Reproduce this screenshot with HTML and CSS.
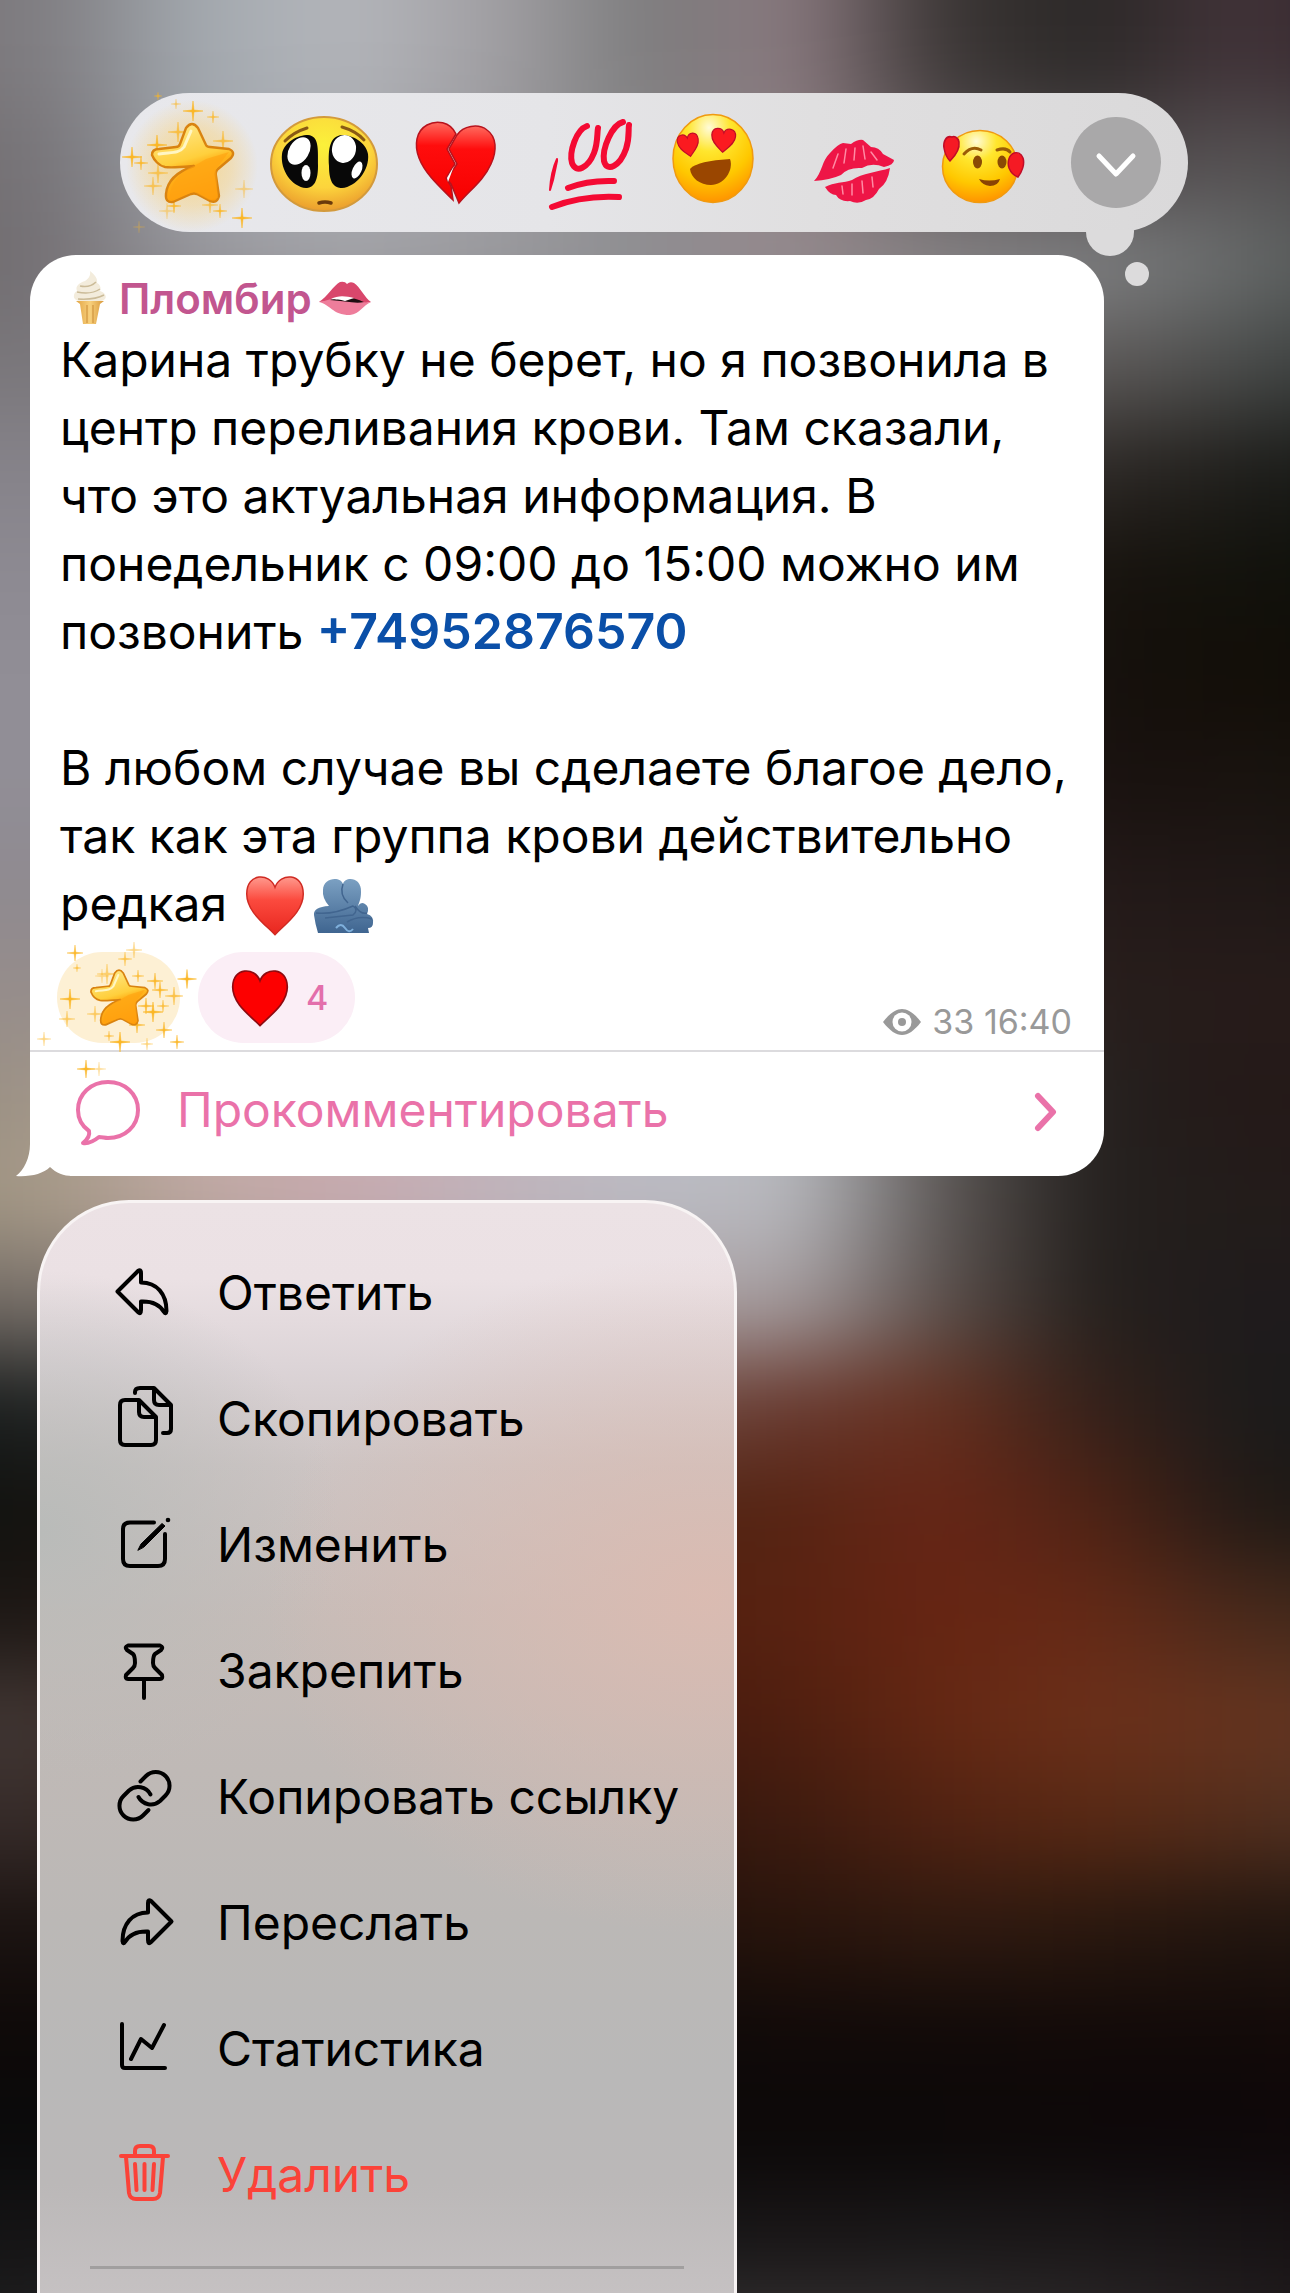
FILE: index.html
```html
<!DOCTYPE html>
<html lang="ru">
<head>
<meta charset="utf-8">
<meta name="viewport" content="width=device-width, initial-scale=1">
<title>Сообщение</title>
<link rel="stylesheet" href="styles.css">
</head>
<body>
<svg class="defs" width="0" height="0" aria-hidden="true">
  <defs>
    <linearGradient id="g-star" x1="0.3" y1="0" x2="0.6" y2="1"><stop offset="0" stop-color="#ffe98a"/><stop offset=".45" stop-color="#ffcf3c"/><stop offset=".55" stop-color="#ffb41c"/><stop offset="1" stop-color="#ff9a08"/></linearGradient>
    <radialGradient id="g-glow"><stop offset="0" stop-color="#ffc94e" stop-opacity=".6"/><stop offset=".6" stop-color="#ffc94e" stop-opacity=".32"/><stop offset="1" stop-color="#ffc94e" stop-opacity="0"/></radialGradient>
    <radialGradient id="g-face" cx=".45" cy=".15" r=".9"><stop offset="0" stop-color="#fffbd8"/><stop offset=".3" stop-color="#ffe62e"/><stop offset=".65" stop-color="#ffc800"/><stop offset="1" stop-color="#ff8a00"/></radialGradient>
    <radialGradient id="g-plead" cx=".5" cy=".3" r=".75"><stop offset="0" stop-color="#fbf13a"/><stop offset=".6" stop-color="#fcd43c"/><stop offset="1" stop-color="#e8922a"/></radialGradient>
    <linearGradient id="g-heart" x1="0" y1="0" x2="0" y2="1"><stop offset="0" stop-color="#ff6a5e"/><stop offset=".3" stop-color="#ff0d0d"/><stop offset="1" stop-color="#f60000"/></linearGradient>
    <linearGradient id="g-heart2" x1="0" y1="0" x2="0" y2="1"><stop offset="0" stop-color="#ff9a8e"/><stop offset=".4" stop-color="#fb4a3e"/><stop offset="1" stop-color="#e8261f"/></linearGradient>
    <linearGradient id="g-hug" x1="0" y1="0" x2="0" y2="1"><stop offset="0" stop-color="#7ba0c2"/><stop offset="1" stop-color="#3f6590"/></linearGradient>
    <linearGradient id="g-cone" x1="0" y1="0" x2="1" y2="0"><stop offset="0" stop-color="#e2a545"/><stop offset=".5" stop-color="#f8d07c"/><stop offset="1" stop-color="#d8983a"/></linearGradient>
    <symbol id="star" viewBox="22 27 88 84">
      <path d="M60 34Q66 26 72 34L80 51Q81 53 84 53L103 55Q110 58 105 64L92 75Q89 78 90 82L93 102Q91 110 84 107L71 100Q68 99 65 100L47 108Q39 109 40 100C41 88 50 78 68 72C56 73 46 74 39 73C33 72 28 66 26 61Q26 55 33 55L50 53Q53 53 54 50Z" fill="url(#g-star)" stroke="#d98310" stroke-width="2.4" stroke-linejoin="round"/>
      <path d="M33 60C44 58 53 60 58 53L65 37" fill="none" stroke="#fff6c4" stroke-width="3" stroke-linecap="round"/>
      <path d="M68 72L80 65L103 58L90 75L92 104L83 106L68 98L44 106C43 92 52 78 68 72Z" fill="#ffa210" opacity=".6"/>
    </symbol>
    <path id="spark" d="M0-10L1-1L10 0L1 1L0 10L-1 1L-10 0L-1-1Z" fill="#fbb625" stroke="#fbb625" stroke-width=".5"/>
    <path id="heart" d="M20 39C12 31 .5 23 .5 11.500C.5-3 16.500-3 20 7C23.500-3 39.500-3 39.500 11.500C39.500 23 28 31 20 39Z"/>
  </defs>
</svg>

<div class="wallpaper" aria-hidden="true">
  <div class="bands">
    <i class="b01"></i><i class="b02"></i><i class="b03"></i><i class="b04"></i><i class="b05"></i><i class="b06"></i>
    <i class="b07"></i><i class="b08"></i><i class="b09"></i><i class="b10"></i><i class="b11"></i><i class="b12"></i>
    <i class="b13"></i><i class="b14"></i><i class="b15"></i><i class="b16"></i><i class="b17"></i><i class="b18"></i>
    <i class="b19"></i><i class="b20"></i><i class="b21"></i><i class="b22"></i><i class="b23"></i><i class="b24"></i>
  </div>
</div>

<main class="screen">
  <div class="picker" role="toolbar" aria-label="Реакции">
    <button class="pick" type="button" aria-label="Звезда">
      <svg viewBox="0 0 132 138">
        <circle cx="66" cy="72" r="66" fill="url(#g-glow)"/>
        <use href="#spark" transform="translate(67 17)"/><use href="#spark" transform="translate(50 10) scale(.5)" opacity=".8"/><use href="#spark" transform="translate(87 23) scale(.6)"/>
        <use href="#spark" transform="translate(52 38)" opacity=".8"/><use href="#spark" transform="translate(97 47)" opacity=".8"/><use href="#spark" transform="translate(31 51)"/>
        <use href="#spark" transform="translate(6 63)"/><use href="#spark" transform="translate(15 69) scale(.7)"/><use href="#spark" transform="translate(32 79)" opacity=".7"/>
        <use href="#spark" transform="translate(27 92) scale(.9)" opacity=".7"/><use href="#spark" transform="translate(118 95) scale(.9)" opacity=".5"/><use href="#spark" transform="translate(48 112) scale(.7)"/>
        <use href="#spark" transform="translate(84 111) scale(.8)" opacity=".8"/><use href="#spark" transform="translate(94 117) scale(.7)"/><use href="#spark" transform="translate(116 124)"/>
        <use href="#spark" transform="translate(41 117) scale(.8)" opacity=".5"/><use href="#spark" transform="translate(13 133) scale(.6)" opacity=".4"/><use href="#spark" transform="translate(32 2) scale(.4)"/>
        <use href="#star" x="22" y="27" width="88" height="84"/>
      </svg>
    </button>
    <button class="pick" type="button" aria-label="Умоляющее лицо">
      <svg viewBox="0 0 132 138">
        <ellipse cx="66" cy="70" rx="53" ry="47" fill="url(#g-plead)" stroke="#d39a3c" stroke-width="2"/>
        <path d="M24 60C26 48 40 41 50 41C61 42 60 54 60 72C60 90 54 94 48 94C34 93 22 76 24 60Z" fill="#080808"/>
        <path d="M110 60C108 48 94 41 84 41C72 42 70 54 71 72C71 90 77 94 84 94C98 93 112 76 110 60Z" fill="#080808"/>
        <ellipse cx="41" cy="57" rx="10" ry="15" transform="rotate(32 41 57)" fill="#fff"/><ellipse cx="86" cy="55" rx="12" ry="14" transform="rotate(10 86 55)" fill="#fff"/>
        <ellipse cx="48" cy="79" rx="4.500" ry="8" fill="#fff"/><ellipse cx="99" cy="76" rx="4.500" ry="9" transform="rotate(24 99 76)" fill="#fff"/>
        <path d="M27 47Q36 38 49 34M84 33Q98 37 106 46" fill="none" stroke="#8a5a14" stroke-width="3" stroke-linecap="round"/>
        <path d="M61 109Q67 107 73 109" fill="none" stroke="#6b3a0c" stroke-width="3.500" stroke-linecap="round"/>
      </svg>
    </button>
    <button class="pick" type="button" aria-label="Разбитое сердце">
      <svg viewBox="0 0 132 138">
        <path d="M66 40C60 27 46 26 37 31C26 37 24 51 29 64C35 80 51 94 63 106L61 92L56 84L65 70L57 55Z" fill="url(#g-heart)" stroke="#b8121c" stroke-width="1.500"/>
        <path d="M67 41C73 32 88 29 97 36C107 43 107 57 101 70C94 86 80 96 69 109L61 90L57 85L67 70L59 55Z" fill="url(#g-heart)" stroke="#b8121c" stroke-width="1.500"/>
        <path d="M57 84L64 72L58 88Z" fill="#fff"/>
      </svg>
    </button>
    <button class="pick" type="button" aria-label="Сто баллов">
      <svg viewBox="0 0 132 138" fill="none" stroke="#f40a33" stroke-linecap="round" stroke-linejoin="round">
        <path d="M35 65Q29 78 28 96L31 86L35 67Z" fill="#f40a33" stroke-width="2"/>
        <g stroke-width="6"><path d="M65 32C54 36 47 58 50 69C54 80 66 74 72 59C76 49 75 39 76 34"/><path d="M101 28C90 31 80 54 82 67C85 79 98 72 104 55C108 43 106 36 107 31"/><path d="M46 94Q66 86 92 87"/><path d="M30 113Q60 101 97 103"/></g>
      </svg>
    </button>
    <button class="pick" type="button" aria-label="Влюблённое лицо">
      <svg viewBox="0 0 132 138">
        <ellipse cx="59" cy="64.500" rx="40" ry="44" fill="url(#g-face)" stroke="#f09a10" stroke-width="1.500"/>
        <g fill="#fb1a20" stroke="#c00c28" stroke-width="2"><use href="#heart" transform="translate(22 42) rotate(-10) scale(.54 .58)"/><use href="#heart" transform="translate(58 34) rotate(4) scale(.61 .6)"/></g>
        <path d="M36 75C42 68 62 66 76 65C80 76 70 91 57 91C46 91 37 84 36 75Z" fill="#9a4600"/>
      </svg>
    </button>
    <button class="pick" type="button" aria-label="Поцелуй">
      <svg viewBox="0 0 132 138" fill="#ee1546">
        <path d="M28 87C36 79 36 66 44 59Q52 50 57 49L65 50Q72 45 77 46L85 53Q93 53 97 60L108 66Q108 71 98 73Q86 68 76 74Q62 73 55 81Q44 86 28 87Z"/>
        <path d="M39 93C48 88 58 89 66 86C76 79 92 78 104 74Q102 89 93 95Q88 105 80 106Q72 111 64 107Q54 108 50 101Q44 101 39 93Z"/>
        <path d="M52 60L47 74M60 55L58 69M69 54L68 66M77 52L79 65M85 58L91 66M56 92L57 100M66 90L66 101M76 87L77 99M86 83L87 93" fill="none" stroke="#ff8ba4" stroke-width="1.500" stroke-linecap="round"/>
      </svg>
    </button>
    <button class="pick" type="button" aria-label="Лицо с сердечками">
      <svg viewBox="0 0 132 138">
        <ellipse cx="62" cy="72.500" rx="37.500" ry="36" fill="url(#g-face)" stroke="#f09a10" stroke-width="1.500"/>
        <g fill="#f51a24" stroke="#c00c28" stroke-width="1.500"><path d="M34 43C28 41 25 48 26 54C27 60 29 64 32 67C37 62 42 55 41 48C40 43 36 42 34 43Z"/><path d="M96 59C91 61 89 68 91 74C93 79 97 82 100 83C104 78 107 70 105 64C103 59 99 58 96 59Z"/></g>
        <ellipse cx="59.500" cy="68" rx="4.500" ry="6.500" fill="#8a4a04"/><ellipse cx="84" cy="68" rx="4.500" ry="6.500" fill="#8a4a04"/>
        <path d="M46 60Q54 51 63 56M79 56Q88 53 92 58" fill="none" stroke="#9a5c06" stroke-width="3" stroke-linecap="round"/>
        <path d="M61 85Q71 88 82 85Q80 92 72 92Q64 91 61 85Z" fill="#8a4304"/>
      </svg>
    </button>
    <button class="pick" type="button" aria-label="Ещё">
      <span class="more"><svg viewBox="0 0 90 90"><path d="M28 39L45 57L62 39" fill="none" stroke="#fff" stroke-width="5" stroke-linecap="round" stroke-linejoin="round"/></svg></span>
    </button>
    <span class="bump"></span><span class="dot"></span>
  </div>

  <article class="message">
    <svg class="tail" viewBox="0 0 56 40" aria-hidden="true"><path d="M14 0V8C14 22 8 34 0 40C14 41 27 38 34 31C40 37 48 40 56 40V0Z" fill="#fff"/></svg>
    <header class="sender">
      <svg class="cone" viewBox="0 0 34 54" aria-hidden="true">
        <path d="M3 30H31L27 33L23 53H10L7 33Z" fill="url(#g-cone)"/>
        <path d="M14 34V52M20 34V52" stroke="#c98a35" stroke-width="1"/>
        <path d="M17 0C22 4 25 8 24 12C28 14 28 18 27 20C34 22 35 29 28 30H6C-1 29 0 22 4 20C2 15 6 12 12 10C15 8 18 5 17 0Z" fill="#f3ecdc"/>
        <path d="M7 15Q17 17 23 11M4 21Q18 24 27 18M5 28Q22 29 31 24" fill="none" stroke="#cbbb98" stroke-width="1.500"/>
      </svg>
      <span>Пломбир</span>
      <svg class="lips" viewBox="0 0 54 34" aria-hidden="true">
        <path d="M1 21C9 16 16 4 22 1Q27 0 29 3Q32 0 36 2C42 6 47 17 53 21L38 24L18 20Z" fill="#d9476c"/>
        <path d="M1 21C12 23 14 34 32 34C42 33 45 24 53 21C44 23 36 18 26 17C16 16 9 20 1 21Z" fill="#ee7d9b"/>
        <path d="M12 19C24 14 38 17 46 21C38 23 26 20 12 19Z" fill="#1c0d10"/><path d="M13 18C20 14 28 15 36 17L27 20C22 18 18 19 13 18Z" fill="#fff"/>
      </svg>
    </header>
    <div class="text">
      <p>Карина трубку не берет, но я позвонила в центр переливания крови. Там сказали, что это актуальная информация. В понедельник с 09:00 до 15:00 можно им позвонить <a href="tel:+74952876570">+74952876570</a></p>
      <p>В любом случае вы сделаете благое дело, так как эта группа крови действительно редкая <svg class="emoji" viewBox="0 0 60 60" role="img" aria-label="сердце"><use href="#heart" transform="translate(1 2) scale(1.450 1.480)" fill="url(#g-heart2)" stroke="#cf2a22" stroke-width="1"/></svg><svg class="emoji hug" viewBox="0 0 60 60" role="img" aria-label="объятия"><path d="M10 15C10 2 28 1 30 9C32 1 49 2 48 17C48 24 46 28 45 31Q48 26 52 29Q57 32 54 39Q61 41 60 48Q60 53 55 53L56 58H5Q2 48 1 40Q0 32 16 31Q9 23 10 15Z" fill="url(#g-hug)"/><path d="M30 9Q26 20 35 28M3 38Q20 40 40 31Q46 35 40 40L12 43M42 31Q48 40 54 38M34 47Q46 40 59 44" fill="none" stroke="#41658f" stroke-width="1.500"/><path d="M23 53Q28 47 32 53T40 54" fill="none" stroke="#7fb0dc" stroke-width="2"/></svg></p>
    </div>
    <div class="status">
      <button class="pill pill-star" type="button" aria-label="Звезда">
        <svg class="pill-art" viewBox="0 0 123 91">
          <g><use href="#spark" transform="translate(18 1) scale(.8)"/><use href="#spark" transform="translate(20 16) scale(.4)"/><use href="#spark" transform="translate(77 -2) scale(.8)" opacity=".6"/><use href="#spark" transform="translate(68 7) scale(.7)" opacity=".8"/>
          <use href="#spark" transform="translate(50 22)" opacity=".6"/><use href="#spark" transform="translate(45 24) scale(.7)" opacity=".5"/><use href="#spark" transform="translate(81 24) scale(.6)"/><use href="#spark" transform="translate(98 29) scale(.8)"/><use href="#spark" transform="translate(130 27) scale(.95)"/>
          <use href="#spark" transform="translate(103 38) scale(.8)"/><use href="#spark" transform="translate(117 44) scale(.9)" opacity=".8"/><use href="#spark" transform="translate(13 47)"/><use href="#spark" transform="translate(89 54) scale(.8)"/><use href="#spark" transform="translate(106 54) scale(.6)"/><use href="#spark" transform="translate(96 60)"/>
          <use href="#spark" transform="translate(10 67) scale(.8)" opacity=".7"/><use href="#spark" transform="translate(38 62) scale(.8)" opacity=".7"/><use href="#spark" transform="translate(107 78) scale(.8)"/><use href="#spark" transform="translate(80 73) scale(.8)"/><use href="#spark" transform="translate(52 84) scale(.5)"/><use href="#spark" transform="translate(63 90)"/>
          <use href="#spark" transform="translate(90 92) scale(.6)" opacity=".7"/><use href="#spark" transform="translate(120 90) scale(.7)"/><use href="#spark" transform="translate(-13 87) scale(.7)" opacity=".6"/><use href="#spark" transform="translate(29 117) scale(.9)"/><use href="#spark" transform="translate(42 117) scale(.7)" opacity=".5"/></g>
          <use href="#star" x="31" y="16" width="62" height="59"/>
        </svg>
      </button>
      <button class="pill pill-heart" type="button" aria-label="Сердце, 4">
        <svg class="pill-heart-art" viewBox="0 0 56 56"><use href="#heart" transform="translate(0 1) scale(1.400 1.400)" fill="#fd0000" stroke="#8f0a10" stroke-width="1.200"/></svg>
        <span>4</span>
      </button>
      <span class="meta">
        <svg class="eye" viewBox="0 0 38 26" aria-hidden="true"><path d="M0 13C7 4 13 0 19 0S31 4 38 13C31 22 25 26 19 26S7 22 0 13Z" fill="#999"/><circle cx="19" cy="13" r="9.500" fill="#fff"/><circle cx="19" cy="13" r="4" fill="#999"/></svg>
        <span>33 16:40</span>
      </span>
    </div>
    <a class="comment" href="#comments">
      <svg class="bubble" viewBox="0 0 66 66" fill="none" stroke="#ea72a9" stroke-width="4" stroke-linejoin="round"><path d="M33 3C50 3 63 15 63 31S50 59 33 59C30 59 27 58 24 58C19 62 14 65 8 64C13 60 15 56 14 52C7 47 3 40 3 31C3 15 16 3 33 3Z"/></svg>
      <span class="comment-label">Прокомментировать</span>
      <svg class="go" viewBox="0 0 24 40" fill="none" stroke="#ea72a9" stroke-width="6" stroke-linecap="round" stroke-linejoin="round"><path d="M4 4L19 20L4 36"/></svg>
    </a>
  </article>

  <nav class="menu" aria-label="Действия">
    <button class="item" type="button"><svg viewBox="0 0 64 64"><path d="M5.500 31.500L26 11Q29 9 29 13V22.500C45 22.500 54.500 34 54.500 51Q54 55 52 52C48 45 41 41 29 41.500V50Q29 55 26 52Z"/></svg><span>Ответить</span></button>
    <button class="item" type="button"><svg viewBox="0 0 64 64"><path d="M27 14H13Q8 14 8 19V54Q8 59 13 59H39Q44 59 44 54V31L27 14V26Q27 31 32 31H44M23 7V6Q23 2 28 2H42L59 19V43Q59 47 55 47H51M42 2V14Q42 19 47 19H59"/></svg><span>Скопировать</span></button>
    <button class="item" type="button"><svg viewBox="0 0 64 64"><path d="M42 10.500H18Q11 10.500 11 17V47Q11 54 18 54H46Q53 54 53 47V22"/><path d="M26 38L29 32L50 11.500L53 14L32 35Z" fill="#000" stroke-width="1"/><circle cx="56" cy="8" r="2.300" fill="#000" stroke="none"/></svg><span>Изменить</span></button>
    <button class="item" type="button"><svg viewBox="0 0 64 64"><path d="M16 7.500H48Q52 9 49 12L43 16Q41 18 41 25Q41 28 43 30L50 37Q51 41 48 41H16Q13 41 14 37L21 30Q23 28 23 25Q23 18 21 16L15 12Q12 9 16 7.500ZM32 41V60"/></svg><span>Закрепить</span></button>
    <button class="item" type="button"><svg viewBox="0 0 64 64"><path d="M28.500 17.500L34 12A13.700 13.700 0 0 1 53.500 31.500L48 37A14 14 0 0 1 26.500 33"/><path d="M36.500 46L31 51.500A13.700 13.700 0 0 1 11.500 32L17 26.500A14 14 0 0 1 38.500 30.500"/></svg><span>Копировать ссылку</span></button>
    <button class="item" type="button"><svg viewBox="0 0 64 64"><path d="M59.500 31.500L39 11Q36 9 36 13V22.500C20 22.500 10.500 34 10.500 51Q11 55 13 52C17 45 24 41 36 41.500V50Q36 55 39 52Z"/></svg><span>Переслать</span></button>
    <button class="item" type="button"><svg viewBox="0 0 64 64"><path d="M10 8V49Q10 52 13 52H53M19 43L29 23L40 32L52 9"/></svg><span>Статистика</span></button>
    <button class="item danger" type="button"><svg viewBox="0 0 64 64"><path d="M9 14H56M23 13V9Q23 4 28 4H37Q42 4 42 9V13M14 15L17 51Q18 57 24 57H41Q47 57 48 51L51 15M23 22L24.500 48M32.500 22V48M42 22L40.500 48"/></svg><span>Удалить</span></button>
    <hr class="rule">
  </nav>
</main>
</body>
</html>
```

FILE: styles.css
```css
* { box-sizing: border-box; }

body {
  margin: 0;
  background: #1c1917;
  color: #000;
  font-family: Inter, "Noto Sans", sans-serif;
  font-size: 48px;
}

button {
  margin: 0;
  padding: 0;
  border: 0;
  background: none;
  color: inherit;
  font: inherit;
  cursor: pointer;
}

svg { display: block; overflow: visible; }
.defs { position: absolute; }

/* Blurred wallpaper: stacked colour bands, softened together */
.wallpaper { position: absolute; inset: 0; overflow: hidden; z-index: -1; }
.bands {
  position: absolute;
  inset: -100px;
  display: grid;
  grid-auto-rows: 1fr;
  filter: blur(42px);
}
.b01, .b02 { background: linear-gradient(90deg, #7a767a, #7f7d81, #a3a9af, #b4b6bb, #a19fa3, #7c7c7d, #8a797f, #3b3635, #2b2827, #43343a, #302428); }
.b03 { background: linear-gradient(90deg, #726e71, #777478, #9fa4ab, #a9abb0, #9a999d, #848384, #8f8084, #595254, #4c4647, #565254, #4a4848); }
.b04 { background: linear-gradient(90deg, #6f6b6e, #747074, #98979c, #a4a4a9, #9c9ca0, #929296, #998d91, #898688, #808183, #686b6b, #4c504f); }
.b05 { background: linear-gradient(90deg, #7a777b 18%, #5a5756 82%, #444746 92%, #343938); }
.b06 { background: linear-gradient(90deg, #86838a 18%, #2a2623 82%, #1c1c19 92%, #141714); }
.b07 { background: linear-gradient(90deg, #8d8a92 18%, #17120d 80%, #12120c 90%, #0d0e09); }
.b08 { background: linear-gradient(90deg, #918e96 18%, #15100c 80%, #130e08 90%, #100c07); }
.b09 { background: linear-gradient(90deg, #918e96 18%, #19110f 80%, #19130f 90%, #16120d); }
.b10 { background: linear-gradient(90deg, #8f8a90 18%, #231918 80%, #201817 90%, #1d1614); }
.b11 { background: linear-gradient(90deg, #968d8b 18%, #271d1b 80%, #271c1a 90%, #281c19); }
.b12 { background: linear-gradient(90deg, #978d82, #9f9487, #bda7a2, #c6a9ae, #bfb2ba, #bbbbc3, #b9babf, #5c5755, #24201e, #241918, #231818); }
.b13 { background: linear-gradient(90deg, #9b9180, #a89b88, #c2aba5, #c9abb0, #c2b5bd, #bbbbc3, #b9babf, #5c5755, #24201e, #231c1a, #231a1a); }
.b14 { background: linear-gradient(90deg, #756d67, #756d67, #8a807a, #a39498, #a39a9d, #a89fa2, #a69d9f, #5a4f4b, #25201d, #1f1b1c, #1e1b1c); }
.b15 { background: linear-gradient(90deg, #1c2020, #1c2020, #3a3230, #5a443f, #6a4b44, #6f4a42, #68392f, #66301f, #35211a, #1c1b1b, #1b1b1b); }
.b16 { background: linear-gradient(90deg, #12120f, #12120f, #251a15, #381f16, #482115, #4e2313, #572413, #672617, #4f2315, #221a16, #1a1713); }
.b17 { background: linear-gradient(90deg, #1d1714, #1d1714, #2a1b15, #381d12, #471f10, #50200f, #5a2211, #672513, #652916, #48291b, #3f2a1b); }
.b18 { background: linear-gradient(90deg, #413633, #413633, #3c2a24, #3c2018, #411b10, #46180c, #4f1f10, #652813, #6c301a, #66341f, #613824); }
.b19 { background: linear-gradient(90deg, #362b29, #362b29, #30221d, #301a13, #31170f, #32160d, #3d1b0f, #512212, #582914, #522d1c, #4e3426); }
.b20 { background: linear-gradient(90deg, #1b1311, #1b1311, #1c1210, #1e110c, #20120b, #22120b, #28140c, #301a10, #2a180f, #21150f, #1f1610); }
.b21 { background: linear-gradient(90deg, #0e0908, #100a09 50%, #130a09); }
.b22 { background: linear-gradient(90deg, #0a0a0b, #0b0808 60%, #0d0709); }
.b23 { background: linear-gradient(90deg, #141415, #181617 50%, #1a1718 80%, #151012); }
.b24 { background: linear-gradient(90deg, #1d1d1e, #353233 50%, #353233 70%, #1e181a); }

.screen {
  display: flex;
  flex-direction: column;
  min-height: 100vh;
  padding-top: 93px;
}

/* Reaction picker */
.picker {
  position: relative;
  display: grid;
  grid-template-columns: repeat(8, 1fr);
  height: 139px;
  margin: 0 102px 23px 120px;
  padding: 0 6px;
  border-radius: 70px;
  background: linear-gradient(90deg, #e8e8ec, #e5e5e8 40%, #e0dfe0 65%, #dad9da);
}
.pick { display: grid; place-items: center; }
.pick > svg { width: 132px; height: 138px; }
.more { width: 90px; height: 91px; border-radius: 50%; background: #a9a8a9; }
.bump, .dot { position: absolute; border-radius: 50%; background: #dcdbdc; }
.bump { right: 54px; bottom: -24px; width: 48px; height: 48px; clip-path: inset(22px 0 0 0); }
.dot { right: 39px; bottom: -54px; width: 24px; height: 24px; }

/* Message bubble; the tail fills its lower left corner */
.message {
  position: relative;
  margin: 0 186px 24px 30px;
  padding-top: 15px;
  border-radius: 46px 46px 46px 0;
  background:
    linear-gradient(#fff, #fff) top / 100% calc(100% - 40px) no-repeat,
    linear-gradient(#fff, #fff) right bottom / calc(100% - 40px) 40px no-repeat;
}
.tail { position: absolute; left: -14px; bottom: 0; width: 56px; height: 40px; }
.sender {
  display: flex;
  align-items: center;
  height: 56px;
  padding-left: 43px;
  color: #c2568f;
  font-size: 42px;
  font-weight: 600;
}
.cone { width: 34px; height: 54px; margin-right: 12px; }
.lips { width: 54px; height: 34px; margin-left: 6px; }
.text { padding: 0 24px 0 30px; line-height: 68px; }
.text p { margin: 0 0 68px; }
.text p:last-child { margin: 0; }
.text a { color: #0a4fa8; font-size: 50px; font-weight: 600; line-height: 1; text-decoration: none; }
.emoji { display: inline-block; width: 60px; height: 60px; margin-left: 4px; vertical-align: -14px; }
.hug { margin-left: 8px; }

.status { display: flex; align-items: flex-start; gap: 18px; padding: 14px 32px 7px 27px; }
.pill { display: flex; align-items: center; height: 91px; border-radius: 46px; }
.pill-star { width: 123px; background: #fdf0d4; }
.pill-art { position: relative; z-index: 1; width: 123px; height: 91px; }
.pill-heart { gap: 18px; padding: 0 27px 0 34px; background: #fbeef6; color: #e36fab; font-size: 34px; font-weight: 500; }
.pill-heart-art { width: 56px; height: 56px; }
.meta { display: flex; align-items: center; gap: 11px; margin: 50px 0 0 auto; color: #999; font-size: 34px; line-height: 40px; }
.eye { width: 38px; height: 26px; }

.comment {
  display: flex;
  align-items: center;
  height: 126px;
  padding: 0 46px 4px 45px;
  border-top: 2px solid #dcdbde;
  color: #ea72a9;
  text-decoration: none;
}
.bubble { width: 66px; height: 66px; margin-right: 36px; }
.comment-label { padding-bottom: 6px; }
.go { width: 24px; height: 40px; margin-left: auto; }

/* Context menu, continues below the fold */
.menu {
  display: flex;
  flex-direction: column;
  flex: 1;
  align-self: flex-start;
  min-width: 700px;
  margin-left: 37px;
  padding: 26px 50px 22px;
  border: 3px solid #f8f4f4;
  border-bottom: 0;
  border-radius: 92px 92px 0 0;
  background:
    radial-gradient(440px 340px at 96% 36%, rgba(219, 187, 177, .95), rgba(219, 187, 177, 0)),
    radial-gradient(300px 260px at 0% 30%, #b9bbb9, rgba(185, 187, 185, 0)),
    linear-gradient(#ece2e5, #ebe1e4 7%, #dcd4d7 15%, #cdc5c4 24%, #c6bcb8 38%, #bfb9b6 52%, #bbb8b6 66%, #b9b8b8 80%, #bbb8b8 90%, #c5c1c2);
}
.item { display: flex; align-items: center; gap: 41px; height: 126px; padding: 0 0 0 22px; text-align: left; }
.item svg { width: 64px; height: 64px; fill: none; stroke: #000; stroke-width: 4; stroke-linecap: round; stroke-linejoin: round; }
.danger { color: #fb4238; }
.danger svg { stroke: #fb4238; }
.rule { width: auto; height: 3px; margin: 29px 0 0; border: 0; background: #a19f9f; }
```
